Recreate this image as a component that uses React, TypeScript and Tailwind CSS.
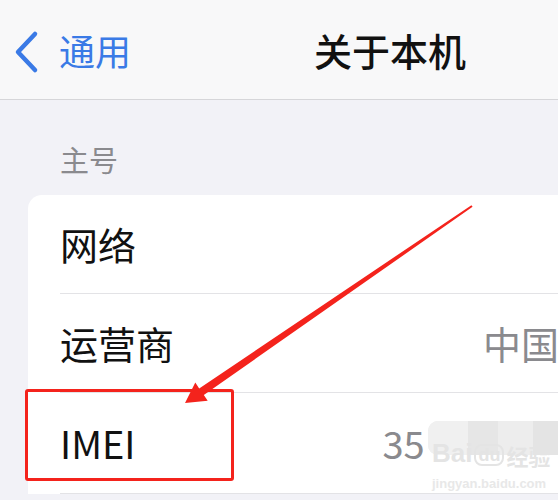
const CJK = "font-['Noto_Sans_CJK_SC','Noto_Sans',sans-serif]";

export default function App() {
  return (
    <div className={`relative h-[500px] w-[558px] overflow-hidden bg-[#f2f2f7] ${CJK}`}>
      {/* nav bar */}
      <div className="flex h-[100px] items-center border-b border-[#d6d6d9] bg-[#f8f8f9]">
        <svg width="28" height="44" viewBox="0 0 28 44" className="ml-[11px] mt-[4px] shrink-0">
          <path
            d="M24 4 L7 22 L24 40"
            fill="none"
            stroke="#3a7ae6"
            strokeWidth="4.5"
            strokeLinecap="round"
            strokeLinejoin="round"
          />
        </svg>
        <span className="ml-[20px] whitespace-nowrap text-[36px] leading-none text-[#3a7ae6]">通用</span>
        <span className="ml-[183px] whitespace-nowrap text-[38px] font-medium leading-none text-[#111]">关于本机</span>
      </div>

      <div className="pl-[60px] pt-[45px] text-[29px] leading-none text-[#8a8a8e]">主号</div>

      {/* card */}
      <div className="ml-[28px] mr-[-40px] mt-[21px] rounded-tl-[14px] bg-white">
        <div className="pl-[32px]">
          <div className="flex h-[99px] items-center border-b border-[#e3e3e6]">
            <span className="whitespace-nowrap text-[38px] leading-none text-[#111]">网络</span>
          </div>
        </div>
        <div className="pl-[32px]">
          <div className="flex h-[99px] items-center border-b border-[#e3e3e6]">
            <span className="shrink-0 whitespace-nowrap text-[38px] leading-none text-[#111]">运营商</span>
            <span className="ml-[309px] shrink-0 whitespace-nowrap text-[38px] leading-none text-[#8a8a8e]">中国</span>
          </div>
        </div>
        <div className="pl-[32px]">
          <div className="flex h-[101px] items-center border-b border-[#e3e3e6]">
            <span className="shrink-0 whitespace-nowrap text-[38px] leading-none text-[#111]">IMEI</span>
            <span className="ml-[247px] shrink-0 text-[38px] leading-none text-[#8a8a8e]">35</span>
          </div>
        </div>
      </div>

      {/* mosaic blur over the number */}
      <div className="absolute left-[428px] top-[421px] flex h-[34px] w-[140px] overflow-hidden rounded-l-[10px] bg-[#ececec]">
        <div className="h-full w-[40px] bg-[#f0f0f0]" />
        <div className="h-full w-[30px] bg-[#e6e6e6]" />
        <div className="h-full w-[35px] bg-[#ededed]" />
        <div className="h-full w-[35px] bg-[#e4e4e4]" />
      </div>

      {/* watermark */}
      <div className="absolute left-[432px] top-[440px] flex items-end text-[#e4e4e4]">
        <span className="font-['Liberation_Sans',sans-serif] text-[26px] font-bold leading-none">Bai</span>
        <span className="ml-[2px] rounded-[8px] border-2 border-[#e4e4e4] px-[2px] font-['Liberation_Sans',sans-serif] text-[18px] font-bold leading-none">
          du
        </span>
        <span className="ml-[2px] text-[22px] font-bold leading-none">经验</span>
      </div>
      <div className="absolute left-[432px] top-[474px] font-['Liberation_Sans',sans-serif] text-[13px] font-bold text-[#e8e8e8]">
        jingyan.baidu.com
      </div>

      {/* red annotation box */}
      <div className="absolute left-[25px] top-[389px] h-[92px] w-[209px] rounded-[3px] border-[3px] border-[#f4231c]" />

      {/* red arrow */}
      <svg className="absolute left-0 top-0" width="558" height="500" viewBox="0 0 558 500">
        <polygon
          points="471.4,205.2 199.2,388.4 195.3,382.6 185,403 207.7,400.8 203.8,395 472.6,206.8"
          fill="#f4231c"
        />
      </svg>
    </div>
  );
}
